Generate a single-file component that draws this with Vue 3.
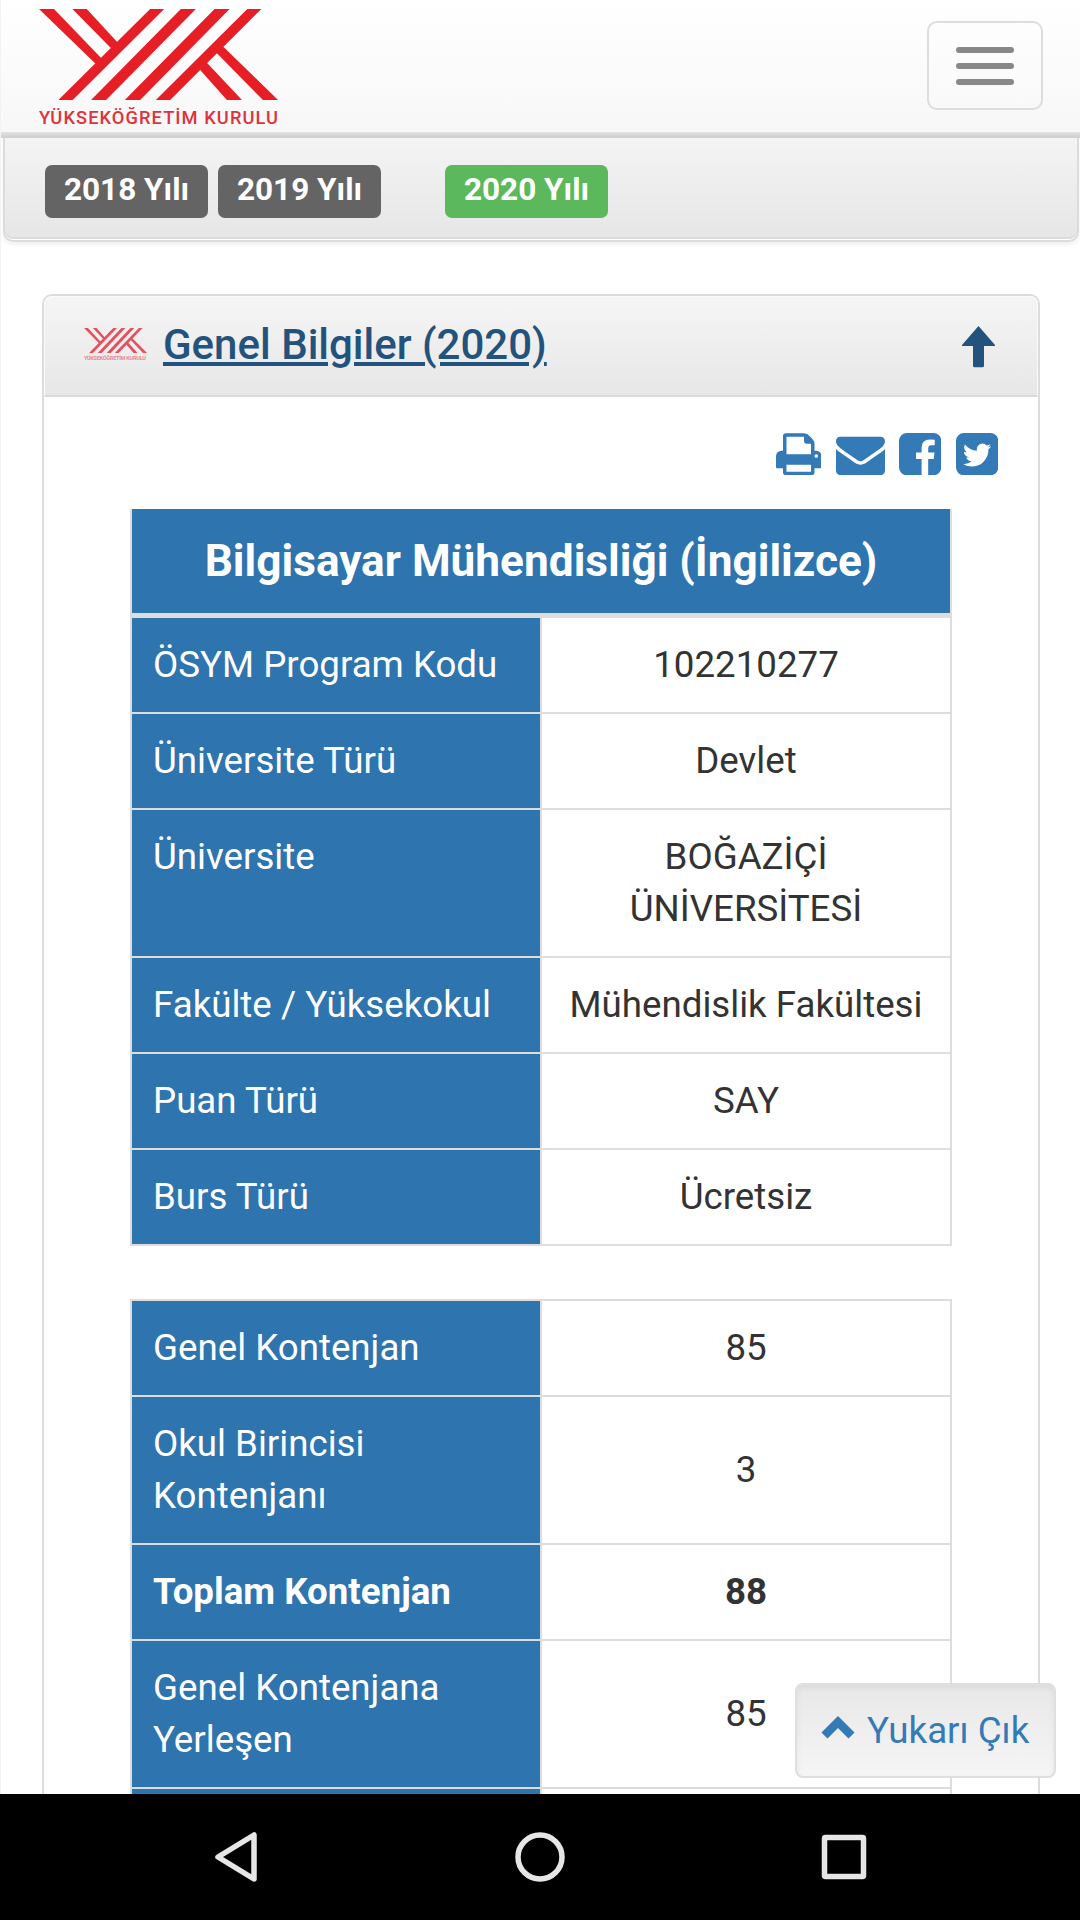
<template>
  <div class="screen">
    <!-- logo shared by the navbar and the panel heading -->
    <svg class="defs" width="0" height="0">
      <symbol id="yok-mark" viewBox="117 27 716 273" preserveAspectRatio="none">
        <path d="M117 27h45l139 145 8 18-24 0z" />
        <path d="M217 27h43l92 100-2 18h-17z" />
        <path d="M450 27h42L218 300h-43z" />
        <path d="M542 27h45L318 300h-45z" />
        <path d="M643 27h45L420 300h-46z" />
        <path d="M741 27h42L510 300h-43z" />
        <path d="M670 141L833 300h-45L650 160l2-19z" />
        <path d="M620 188L725 300h-45L600 210l0-22z" />
      </symbol>
    </svg>

    <div class="page">
      <header class="navbar">
        <svg class="logo" width="239" height="119" viewBox="0 0 239 119">
          <use href="#yok-mark" x="0" y="0" width="239" height="91" />
          <text x="0" y="115.3" textLength="239" lengthAdjust="spacing">YÜKSEKÖĞRETİM KURULU</text>
        </svg>
        <button type="button" class="navbar-toggle">
          <span class="icon-bar"></span>
          <span class="icon-bar"></span>
          <span class="icon-bar"></span>
        </button>
      </header>

      <div class="years">
        <span
          v-for="year in years"
          :key="year.value"
          class="label"
          :class="{ active: year.active }"
        >{{ year.value }} Yılı</span>
      </div>

      <section class="panel">
        <div class="panel-heading">
          <svg class="logo-small" width="63" height="32" viewBox="0 0 63 32">
            <use href="#yok-mark" x="0" y="0" width="63" height="25" />
            <text x="0" y="31.5" textLength="62" lengthAdjust="spacing">YÜKSEKÖĞRETİM KURULU</text>
          </svg>
          <a class="panel-title">Genel Bilgiler (2020)</a>
          <svg class="arrow-up" width="33" height="42" viewBox="0 0 33 42">
            <path d="M16.5 0L33 19q.6 1-.6 1H22v19.700q0 1.600-1.600 1.600h-7.800q-1.600 0-1.600-1.600V20H.6q-1.200 0-.6-1z" />
          </svg>
        </div>

        <div class="panel-body">
          <div class="share">
            <svg v-for="icon in shareIcons" :key="icon.name" :width="icon.width" height="42.300" :viewBox="icon.box">
              <path :d="icon.path" />
            </svg>
          </div>

          <div class="info-table">
            <div class="info-head">Bilgisayar Mühendisliği (İngilizce)</div>
            <div v-for="row in program" :key="row.name" class="info-row">
              <div class="name">{{ row.name }}</div>
              <div class="value">{{ row.value }}</div>
            </div>
          </div>

          <div class="info-table quota">
            <div v-for="row in quota" :key="row.name" class="info-row" :class="{ total: row.total }">
              <div class="name">{{ row.name }}</div>
              <div class="value">{{ row.value }}</div>
            </div>
          </div>
        </div>
      </section>

      <button type="button" class="to-top">
        <svg width="34" height="24" viewBox="0 0 34 24">
          <path d="M17 0L33.500 16.500 27.500 22.500 17 12 6.500 22.500.5 16.500z" />
        </svg>
        <span>Yukarı Çık</span>
      </button>
    </div>

    <nav class="android-nav">
      <svg width="44" height="52" viewBox="0 0 44 52">
        <path d="M40 4v44L4 26z" />
      </svg>
      <svg width="50" height="52" viewBox="0 0 50 52">
        <circle cx="25" cy="26" r="22" />
      </svg>
      <svg width="46" height="52" viewBox="0 0 46 52">
        <rect x="3.500" y="6.500" width="39" height="39" rx="1" />
      </svg>
    </nav>
  </div>
</template>

<script setup>
import { ref } from 'vue'

const years = ref([
  { value: 2018, active: false },
  { value: 2019, active: false },
  { value: 2020, active: true },
])

const program = ref([
  { name: 'ÖSYM Program Kodu', value: '102210277' },
  { name: 'Üniversite Türü', value: 'Devlet' },
  { name: 'Üniversite', value: 'BOĞAZİÇİ ÜNİVERSİTESİ' },
  { name: 'Fakülte / Yüksekokul', value: 'Mühendislik Fakültesi' },
  { name: 'Puan Türü', value: 'SAY' },
  { name: 'Burs Türü', value: 'Ücretsiz' },
])

const quota = ref([
  { name: 'Genel Kontenjan', value: '85' },
  { name: 'Okul Birincisi Kontenjanı', value: '3' },
  { name: 'Toplam Kontenjan', value: '88', total: true },
  { name: 'Genel Kontenjana Yerleşen', value: '85' },
  { name: '', value: '' },
])

const shareIcons = [
  {
    name: 'print',
    width: 45.5,
    box: '64 128 1664 1536',
    path: 'M448 1536h896v-256h-896v256zm0-640h896v-384h-160q-40 0-68-28t-28-68v-160h-640v640zm1152 64q0-26-19-45t-45-19-45 19-19 45 19 45 45 19 45-19 19-45zm128 0v416q0 13-9.5 22.5t-22.5 9.5h-224v160q0 40-28 68t-68 28h-960q-40 0-68-28t-28-68v-160h-224q-13 0-22.5-9.5t-9.5-22.5v-416q0-79 56.5-135.5t135.5-56.5h64v-544q0-40 28-68t68-28h672q40 0 88 20t76 48l152 152q28 28 48 76t20 88v256h64q79 0 135.5 56.5t56.5 135.5z',
  },
  {
    name: 'envelope',
    width: 49,
    box: '0 128 1792 1536',
    path: 'M1792 710v794q0 66-47 113t-113 47h-1472q-66 0-113-47t-47-113v-794q44 49 101 87 362 246 497 345 57 42 92.5 65.5t94.5 48 110 24.5h2q51 0 110-24.5t94.5-48 92.5-65.5q170-123 498-345 57-39 100-87zm0-294q0 79-49 151t-122 123q-376 261-468 325-10 7-42.5 30.5t-54 38-52 32.5-57.5 27-50 9h-2q-23 0-50-9t-57.5-27-52-32.5-54-38-42.5-30.5q-91-64-262-182.5t-205-142.5q-62-42-117-115.5t-55-136.5q0-78 41.5-130t118.5-52h1472q65 0 112.5 47t47.5 113z',
  },
  {
    name: 'facebook',
    width: 42.3,
    box: '128 128 1536 1536',
    path: 'M1376 128q119 0 203.5 84.5t84.5 203.5v960q0 119-84.5 203.5t-203.5 84.5h-188v-595h199l30-232h-229v-148q0-56 23.5-84t91.5-28l122-1v-207q-63-9-178-9-136 0-217.5 80t-81.5 226v171h-200v232h200v595h-532q-119 0-203.5-84.5t-84.5-203.5v-960q0-119 84.5-203.5t203.5-84.5h960z',
  },
  {
    name: 'twitter',
    width: 42.3,
    box: '128 128 1536 1536',
    path: 'M1408 610q-56 25-121 34 68-40 93-117-65 38-134 51-61-66-153-66-87 0-148.5 61.5t-61.5 148.5q0 29 5 48-129-7-242-65t-192-155q-29 50-29 106 0 114 91 175-47-1-100-26v2q0 75 50 133.5t123 72.5q-29 8-51 8-13 0-39-4 21 63 74.5 104t121.5 42q-116 90-261 90-26 0-50-3 148 94 322 94 112 0 210-35.5t168-95 120.5-137 75-162 24.5-168.5q0-18-1-27 63-45 105-109zm256-194v960q0 119-84.5 203.5t-203.5 84.5h-960q-119 0-203.5-84.5t-84.5-203.5v-960q0-119 84.5-203.5t203.5-84.5h960q119 0 203.5 84.5t84.5 203.5z',
  },
]
</script>

<style scoped>
* {
  box-sizing: border-box;
}

.screen {
  width: 1080px;
  height: 1920px;
  display: flex;
  flex-direction: column;
  overflow: hidden;
  background: #fff;
  color: #333;
  font-family: Roboto, sans-serif;
  font-size: 36.7px;
  line-height: 52px;
}

.defs {
  position: absolute;
}

.page {
  position: relative;
  height: 1794px;
  overflow: hidden;
  border-left: 1px solid #f3f3f3;
}

.navbar {
  display: flex;
  justify-content: space-between;
  align-items: flex-start;
  height: 138px;
  margin-left: -1px;
  padding: 9px 37px 0 39px;
  background: linear-gradient(#e2e2e2, #cecece) 0 132px / 100% 6px no-repeat,
    linear-gradient(#fff, #f7f7f7);
}

.logo {
  fill: #e61e25;
}

.logo text {
  font-size: 18.3px;
  font-weight: 500;
  fill: #e0323c;
}

.navbar-toggle {
  display: flex;
  flex-direction: column;
  align-items: center;
  gap: 10px;
  width: 116px;
  height: 89px;
  margin-top: 12px;
  padding: 24px 0 0;
  background: transparent;
  border: 2px solid #ddd;
  border-radius: 10px;
}

.icon-bar {
  width: 58px;
  height: 6px;
  border-radius: 3px;
  background: #888;
}

.years {
  display: flex;
  align-items: flex-start;
  gap: 10px;
  height: 104px;
  margin: 0 1px 0 2px;
  padding: 27px 40px 0;
  background: linear-gradient(#f4f4f4, #e6e6e6);
  border: 2px solid #dcdcdc;
  border-top: none;
  border-radius: 0 0 10px 10px;
  box-shadow: inset 0 -1px 0 #fff, inset 0 -3px 0 #dcdcdc, 0 3px 4px rgba(0, 0, 0, 0.06);
}

.label {
  width: 163px;
  height: 53px;
  border-radius: 7px;
  background: #646464;
  color: #fff;
  font-size: 31.5px;
  font-weight: 700;
  line-height: 50px;
  text-align: center;
}

.label.active {
  margin-left: 54px;
  background: #5cb85c;
}

.panel {
  width: 998px;
  height: 1600px;
  margin: 52px 0 0 41px;
  border: 2px solid #dcdcdc;
  border-radius: 10px;
}

.panel-heading {
  display: flex;
  align-items: flex-start;
  height: 101px;
  padding: 30px 42px 0 39px;
  background: linear-gradient(#f5f5f5, #e7e7e7);
  border: 1px solid #fafafa;
  border-bottom: 2px solid #dadada;
  border-radius: 8px 8px 0 0;
}

.logo-small {
  margin-top: 1px;
  fill: #e5505e;
}

.logo-small text {
  font-size: 5.5px;
  font-weight: 700;
  fill: #e58a92;
}

.panel-title {
  margin-left: 16px;
  margin-top: -5px;
  color: #23527c;
  font-size: 42px;
  font-weight: 500;
  line-height: 46px;
  text-decoration: underline;
}

.arrow-up {
  margin-left: auto;
  margin-top: -1px;
  fill: #23527c;
}

.panel-body {
  display: flex;
  flex-direction: column;
  padding: 36px 40px 0 86px;
}

.share {
  display: flex;
  justify-content: flex-end;
  gap: 14.4px;
  height: 42.3px;
  fill: #337ab7;
}

.info-table {
  width: 822px;
  margin-top: 33.7px;
  border: 2px solid #ddd;
  border-top: none;
}

.info-table.quota {
  margin-top: 53px;
  border-top: 2px solid #ddd;
}

.info-head {
  height: 109px;
  border-bottom: 5px solid #ddd;
  background: #2e74ae;
  color: #fff;
  font-size: 44.2px;
  font-weight: 700;
  line-height: 104px;
  text-align: center;
}

.info-row {
  display: flex;
  border-bottom: 2px solid #ddd;
}

.info-row:last-child {
  border-bottom: none;
}

.name {
  width: 410px;
  padding: 21px 20px 21px 21px;
  border-right: 2px solid #ddd;
  background: #2e74ae;
  color: #fff;
}

.value {
  flex: 1;
  display: flex;
  align-items: center;
  justify-content: center;
  padding: 21px;
  text-align: center;
}

.total {
  font-weight: 700;
}

.to-top {
  position: absolute;
  right: 24px;
  bottom: 16px;
  display: flex;
  align-items: flex-start;
  gap: 12px;
  width: 261px;
  height: 95px;
  padding: 20px 0 0 24px;
  background: linear-gradient(#e8e8e8, #f5f5f5);
  border: 2px solid #dfdfdf;
  border-radius: 8px;
  box-shadow: inset 0 3px 6px rgba(0, 0, 0, 0.06);
  color: #337ab7;
  fill: #337ab7;
  font-family: inherit;
  font-size: 36.7px;
  line-height: 52px;
}

.to-top svg {
  margin-top: 11px;
}

.android-nav {
  display: flex;
  justify-content: space-between;
  align-items: center;
  height: 126px;
  padding: 0 213px 0 214px;
  background: #000;
  fill: none;
  stroke: #e6e6e6;
  stroke-width: 5.5px;
  stroke-linejoin: round;
}
</style>

<style>
body {
  margin: 0;
  background: #fff;
}
</style>
